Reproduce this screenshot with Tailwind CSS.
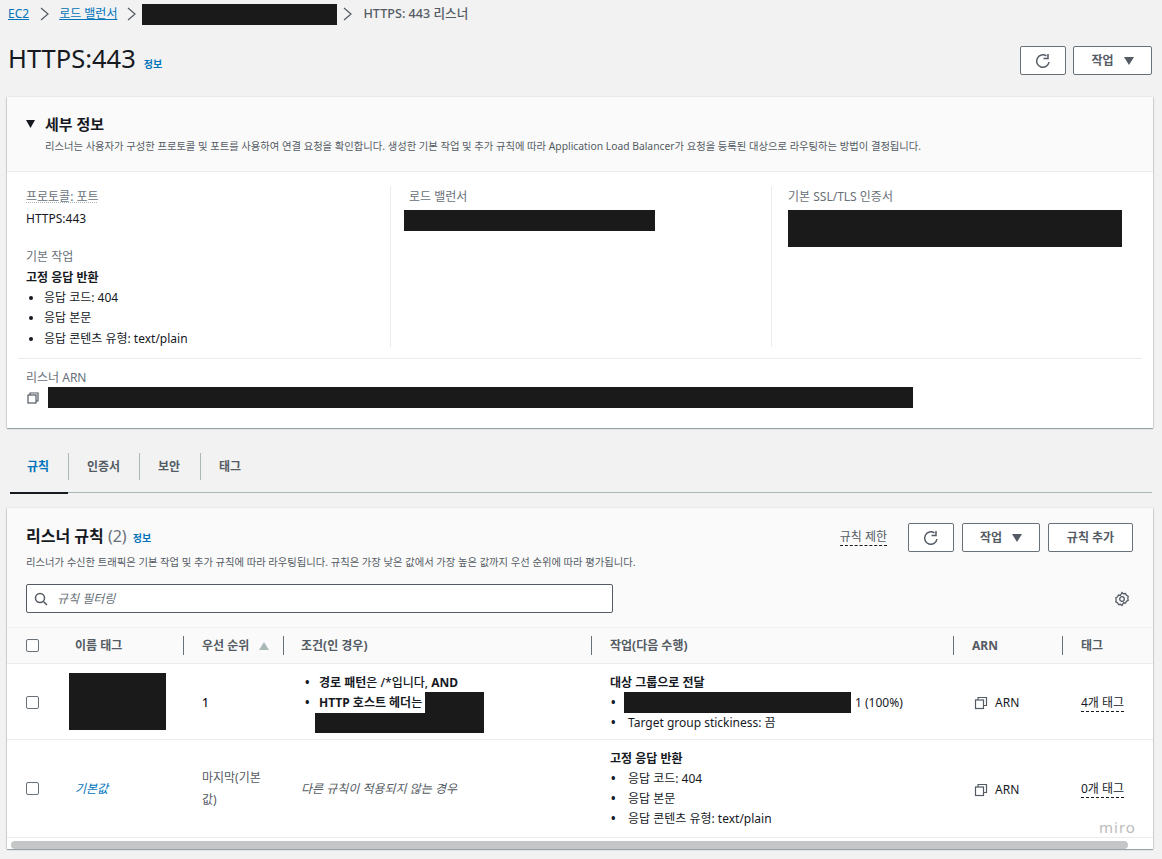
<!DOCTYPE html>
<html lang="ko">
<head>
<meta charset="utf-8">
<script src="https://cdn.jsdelivr.net/npm/@tailwindcss/browser@4"></script>
</head>
<body class="bg-[#f2f2f2] font-['Noto_Sans','Noto_Sans_CJK_KR',sans-serif] text-[#16191f] w-[1162px] h-[859px] overflow-hidden relative">
<!-- breadcrumb -->
<nav class="h-[28px] pl-2 flex items-center text-[12px] text-[#545b64]">
  <a class="text-[#0073bb] underline">EC2</a>
  <svg class="ml-[11px] mr-[9px]" width="10" height="14" viewBox="0 0 10 14" fill="none" stroke="#545b64" stroke-width="1.2"><path d="M1 1l7 6-7 6"/></svg>
  <a class="text-[#0073bb] underline">로드 밸런서</a>
  <svg class="ml-[10px] mr-[5px]" width="10" height="14" viewBox="0 0 10 14" fill="none" stroke="#545b64" stroke-width="1.2"><path d="M1 1l7 6-7 6"/></svg>
  <span class="w-[195px] h-[21px] bg-[#1a1a1a]"></span>
  <svg class="ml-[6px] mr-[10px]" width="10" height="14" viewBox="0 0 10 14" fill="none" stroke="#545b64" stroke-width="1.2"><path d="M1 1l7 6-7 6"/></svg>
  <span class="font-medium text-[12.6px]">HTTPS: 443 리스너</span>
</nav>
<!-- header -->
<header class="h-[69px] pl-2 pr-[10px] flex items-start justify-between">
  <div class="flex items-baseline gap-[8px] mt-[12px]">
    <h1 class="text-[25.5px] leading-[36px] font-normal">HTTPS:443</h1>
    <a class="text-[10px] font-bold text-[#0073bb]">정보</a>
  </div>
  <div class="flex gap-[7px] mt-[18px]">
    <button class="w-[46px] h-[29px] bg-white border border-[#687078] rounded-[2px] flex items-center justify-center">
      <svg width="16" height="16" viewBox="0 0 16 16" fill="none" stroke="#545b64" stroke-width="1.5"><path d="M14 9A6.200 6.200 0 1 1 11.500 3"/><path d="M13 1v4.500H8.500"/></svg>
    </button>
    <button class="w-[79px] h-[29px] bg-white border border-[#687078] rounded-[2px] flex items-center justify-center gap-[10px] text-[12px] font-bold text-[#545b64]">작업
      <svg width="10" height="8" viewBox="0 0 10 8" fill="#545b64"><path d="M0 0h10L5 8z"/></svg>
    </button>
  </div>
</header>
<!-- details card -->
<section class="ml-[7px] mr-[9px] h-[331px] bg-white shadow-[0_1px_1px_rgba(0,28,36,0.35),1px_0_1px_rgba(0,28,36,0.1),-1px_0_1px_rgba(0,28,36,0.1)]">
  <div class="h-[75px] bg-[#fafafa] border-b border-[#eaeded] pl-[19px] pt-[15px]">
    <div class="flex items-center gap-[10px] h-[24px]">
      <svg width="9" height="8" viewBox="0 0 9 8" fill="#16191f"><path d="M0 0h9L4.500 8z"/></svg>
      <h2 class="text-[15px] font-bold">세부 정보</h2>
    </div>
    <p class="ml-[19px] mt-[2px] text-[10.32px] leading-[16px] text-[#545b64] whitespace-nowrap">리스너는 사용자가 구성한 프로토콜 및 포트를 사용하여 연결 요청을 확인합니다. 생성한 기본 작업 및 추가 규칙에 따라 Application Load Balancer가 요청을 등록된 대상으로 라우팅하는 방법이 결정됩니다.</p>
  </div>
  <div class="h-[186px] pt-[14px] grid grid-cols-[383px_381px_1fr] text-[12px]">
    <div class="pl-[19px] h-[161px] pt-px">
      <div class="text-[#687078] leading-[20px] underline decoration-dotted decoration-[#aab7b8]">프로토콜: 포트</div>
      <div class="leading-[20px] mt-[2px]">HTTPS:443</div>
      <div class="text-[#687078] leading-[20px] mt-[18px]">기본 작업</div>
      <div class="leading-[20px] font-bold mt-px">고정 응답 반환</div>
      <ul class="list-disc pl-[18px] leading-[20px]">
        <li>응답 코드: 404</li>
        <li>응답 본문</li>
        <li class="mt-px">응답 콘텐츠 유형: text/plain</li>
      </ul>
    </div>
    <div class="border-l border-[#eaeded] pl-[13px] h-[161px]">
      <div class="pl-[5px] text-[#687078] leading-[20px] pt-px">로드 밸런서</div>
      <div class="mt-[3px] w-[251px] h-[21px] bg-[#1a1a1a]"></div>
    </div>
    <div class="border-l border-[#eaeded] pl-[16px] h-[161px]">
      <div class="text-[#687078] leading-[20px] pt-px">기본 SSL/TLS 인증서</div>
      <div class="mt-[3px] w-[334px] h-[37px] bg-[#1a1a1a]"></div>
    </div>
  </div>
  <div class="mx-[11px] border-t border-[#eaeded] pt-[9px] pl-[8px] text-[12px]">
    <div class="text-[#687078] leading-[18px] pt-px -mb-px">리스너 ARN</div>
    <div class="flex items-center gap-[8px] mt-[1px]">
      <svg width="14" height="14" viewBox="0 0 14 14" fill="none" stroke="#545b64" stroke-width="1.2"><rect x="2" y="4" width="8" height="8"/><path d="M4 4V2h8v8h-2"/></svg>
      <div class="w-[865px] h-[21px] bg-[#1a1a1a]"></div>
    </div>
  </div>
</section>
<!-- tabs -->
<div class="mx-[10px] mt-[24px] h-[41px] flex items-start border-b-[1px] border-[#aab7b8] text-[12px] font-bold text-[#545b64]">
  <div class="relative h-[41px] w-[58px] pl-[17px] pt-[6px] text-[#0073bb] leading-[18px]">규칙<span class="absolute left-0 right-0 bottom-[-1px] h-[2px] bg-[#16191f]"></span></div>
  <div class="h-[27px] w-px bg-[#aab7b8] mt-px"></div>
  <div class="w-[70px] pl-[18px] pt-[6px] leading-[18px]">인증서</div>
  <div class="h-[27px] w-px bg-[#aab7b8] mt-px"></div>
  <div class="w-[60px] pl-[18px] pt-[6px] leading-[18px]">보안</div>
  <div class="h-[27px] w-px bg-[#aab7b8] mt-px"></div>
  <div class="pl-[18px] pt-[6px] leading-[18px]">태그</div>
</div>
<!-- rules card -->
<section class="ml-[7px] mr-[9px] mt-[15px] h-[341px] bg-white shadow-[0_1px_1px_rgba(0,28,36,0.35),1px_0_1px_rgba(0,28,36,0.1),-1px_0_1px_rgba(0,28,36,0.1)] relative">
  <div class="h-[120px] bg-[#fafafa] pl-[19px] pr-[20px] border-b border-[#f2f2f2]">
    <div class="flex items-start justify-between pt-[15px]">
      <div class="flex items-baseline gap-[6px] mt-[1px]">
        <h2 class="text-[16px] leading-[24px] font-bold">리스너 규칙 <span class="font-normal text-[#687078]">(2)</span></h2>
        <a class="text-[10px] font-bold text-[#0073bb]">정보</a>
      </div>
      <div class="flex items-center">
        <span class="text-[12px] text-[#545b64] border-b border-dashed border-[#16191f] leading-[16px] mr-[21px]">규칙 제한</span>
        <button class="w-[46px] h-[29px] bg-white border border-[#687078] rounded-[2px] flex items-center justify-center mr-[8px]">
          <svg width="16" height="16" viewBox="0 0 16 16" fill="none" stroke="#545b64" stroke-width="1.5"><path d="M14 9A6.200 6.200 0 1 1 11.500 3"/><path d="M13 1v4.500H8.500"/></svg>
        </button>
        <button class="w-[78px] h-[29px] bg-white border border-[#687078] rounded-[2px] flex items-center justify-center gap-[10px] text-[12px] font-bold text-[#545b64] mr-[8px]">작업
          <svg width="10" height="8" viewBox="0 0 10 8" fill="#545b64"><path d="M0 0h10L5 8z"/></svg>
        </button>
        <button class="w-[85px] h-[29px] bg-white border border-[#687078] rounded-[2px] text-[12px] font-bold text-[#545b64]">규칙 추가</button>
      </div>
    </div>
    <p class="text-[10.32px] leading-[16px] text-[#545b64] mt-[2px] whitespace-nowrap">리스너가 수신한 트래픽은 기본 작업 및 추가 규칙에 따라 라우팅됩니다. 규칙은 가장 낮은 값에서 가장 높은 값까지 우선 순위에 따라 평가됩니다.</p>
    <div class="flex items-center justify-between mt-[14px]">
      <div class="w-[587px] h-[29px] bg-white border border-[#545b64] rounded-[2px] flex items-center pl-[7px] gap-[9px] text-[12px] italic text-[#687078]">
        <svg width="14" height="14" viewBox="0 0 14 14" fill="none" stroke="#545b64" stroke-width="1.5"><circle cx="6" cy="6" r="4.500"/><path d="M9.500 9.500l3.500 3.500"/></svg>
        규칙 필터링
      </div>
      <svg class="mr-[3px]" width="16" height="16" viewBox="0 0 16 16" fill="none" stroke="#545b64" stroke-width="1.3"><path d="M8 1.500l1.500 1.300 2-.3 1 1.800 1.700 1-.4 2 .4 2-1.700 1-1 1.800-2-.3L8 14.500l-1.500-1.200-2 .3-1-1.800-1.700-1 .4-2-.4-2 1.700-1 1-1.800 2 .3z"/><circle cx="8" cy="8" r="2.300"/></svg>
    </div>
  </div>
  <!-- table -->
  <div class="grid grid-cols-[49px_127px_100px_308px_362px_109px_91px] text-[12px]">
    <!-- header row -->
    <div class="col-span-7 grid grid-cols-subgrid h-[36px] bg-[#fafafa] border-b border-[#eaeded] items-center font-bold text-[#545b64]">
      <div class="pl-[19px] flex"><span class="w-[13px] h-[13px] bg-white border border-[#687078] rounded-[2px]"></span></div>
      <div class="pl-[19px] pt-px">이름 태그</div>
      <div class="h-[19px] border-l border-[#687078] pl-[18px] flex items-center gap-[10px]"><span class="pt-px">우선 순위</span> <svg width="10" height="8" viewBox="0 0 10 8" fill="#aab7b8"><path d="M0 8h10L5 0z"/></svg></div>
      <div class="h-[19px] border-l border-[#687078] pl-[17px] flex items-center pt-px">조건(인 경우)</div>
      <div class="h-[19px] border-l border-[#687078] pl-[18px] flex items-center pt-px">작업(다음 수행)</div>
      <div class="h-[19px] border-l border-[#687078] pl-[18px] flex items-center pt-px">ARN</div>
      <div class="h-[19px] border-l border-[#687078] pl-[18px] flex items-center pt-px">태그</div>
    </div>
    <!-- row 1 -->
    <div class="col-span-7 grid grid-cols-subgrid h-[76px] border-b border-[#eaeded] items-center">
      <div class="pl-[19px] flex pt-px"><span class="w-[13px] h-[13px] bg-white border border-[#687078] rounded-[2px]"></span></div>
      <div class="pl-[13px]"><div class="w-[97px] h-[57px] bg-[#1a1a1a]"></div></div>
      <div class="pl-[19px] text-[#16191f] font-medium pt-[2px]">1</div>
      <div class="pl-[18px] leading-[20px] font-medium">
        <div class="flex mt-[2px]"><span class="w-[18px] pl-[4px] font-bold">•</span><span><b>경로 패턴</b>은 /*입니다, <b>AND</b></span></div>
        <div class="flex h-[20px] items-start"><span class="w-[18px] pl-[4px] font-bold">•</span><b class="whitespace-nowrap">HTTP 호스트 헤더</b>는<span class="ml-[3px] w-[59px] h-[21px] bg-[#1a1a1a] -mt-px"></span></div>
        <div class="ml-[14px] w-[169px] h-[20px] bg-[#1a1a1a]"></div>
      </div>
      <div class="pl-[19px] leading-[20px] mt-[2px]">
        <div class="font-bold">대상 그룹으로 전달</div>
        <div class="flex items-center h-[20px]"><span class="w-[14px] pl-[1px] font-bold">•</span><span class="w-[227px] h-[21px] bg-[#1a1a1a] mr-[4px]"></span>1 (100%)</div>
        <div class="flex"><span class="w-[18px] pl-[1px] font-bold">•</span>Target group stickiness: 끔</div>
      </div>
      <div class="pl-[21px] flex items-center gap-[7px] pt-[3px]"><svg width="14" height="14" viewBox="0 0 14 14" fill="none" stroke="#545b64" stroke-width="1.200"><rect x="1.500" y="4" width="8" height="8.500"/><path d="M4 4V1.500h8.500v8H9.500"/></svg>ARN</div>
      <div class="pl-[19px] pt-[2px]"><span class="border-b border-dashed border-[#16191f] leading-[16px] inline-block">4개 태그</span></div>
    </div>
    <!-- row 2 -->
    <div class="col-span-7 grid grid-cols-subgrid h-[98px] border-b border-[#eaeded] items-center">
      <div class="pl-[19px] flex"><span class="w-[13px] h-[13px] bg-white border border-[#687078] rounded-[2px]"></span></div>
      <div class="pl-[19px] italic text-[#0073bb]">기본값</div>
      <div class="pl-[19px] pr-[16px] leading-[22px] text-[#545b64]">마지막(기본값)</div>
      <div class="pl-[18px] italic text-[#545b64]">다른 규칙이 적용되지 않는 경우</div>
      <div class="pl-[19px] leading-[20px]">
        <div class="font-bold">고정 응답 반환</div>
        <div class="flex"><span class="w-[18px] pl-[1px] font-bold">•</span>응답 코드: 404</div>
        <div class="flex"><span class="w-[18px] pl-[1px] font-bold">•</span>응답 본문</div>
        <div class="flex"><span class="w-[18px] pl-[1px] font-bold">•</span>응답 콘텐츠 유형: text/plain</div>
      </div>
      <div class="pl-[21px] flex items-center gap-[7px] pt-[2px]"><svg width="14" height="14" viewBox="0 0 14 14" fill="none" stroke="#545b64" stroke-width="1.200"><rect x="1.500" y="4" width="8" height="8.500"/><path d="M4 4V1.500h8.500v8H9.500"/></svg>ARN</div>
      <div class="pl-[19px]"><span class="border-b border-dashed border-[#16191f] leading-[16px] inline-block">0개 태그</span></div>
    </div>
  </div>
  <div class="mt-[3px] ml-[4px] w-[1117px] h-[8px] rounded-full bg-[#c4c6c7]"></div>
  <span class="absolute left-[1092px] top-[308px] text-[15px] tracking-[1px] text-[#bcbcbc]">miro</span>
</section>
</body>
</html>
